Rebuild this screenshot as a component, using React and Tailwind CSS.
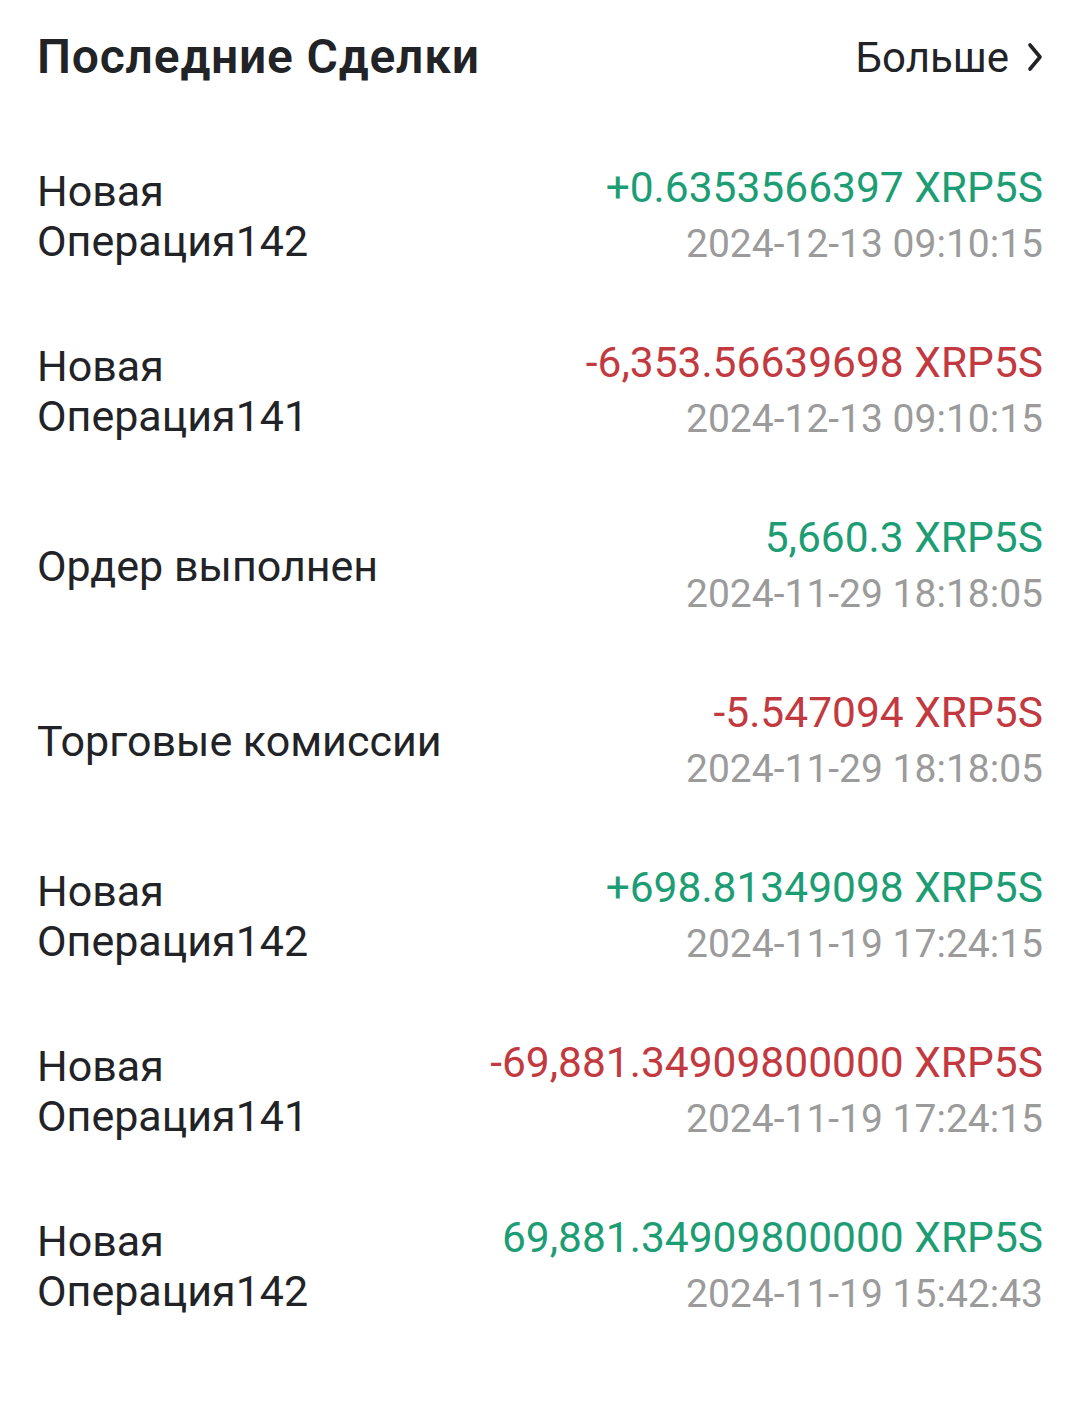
import React from "react";

const trades = [
  { title: ["Новая", "Операция142"], amount: "+0.6353566397 XRP5S", up: true, time: "2024-12-13 09:10:15" },
  { title: ["Новая", "Операция141"], amount: "-6,353.56639698 XRP5S", up: false, time: "2024-12-13 09:10:15" },
  { title: ["Ордер выполнен"], amount: "5,660.3 XRP5S", up: true, time: "2024-11-29 18:18:05" },
  { title: ["Торговые комиссии"], amount: "-5.547094 XRP5S", up: false, time: "2024-11-29 18:18:05" },
  { title: ["Новая", "Операция142"], amount: "+698.81349098 XRP5S", up: true, time: "2024-11-19 17:24:15" },
  { title: ["Новая", "Операция141"], amount: "-69,881.34909800000 XRP5S", up: false, time: "2024-11-19 17:24:15" },
  { title: ["Новая", "Операция142"], amount: "69,881.34909800000 XRP5S", up: true, time: "2024-11-19 15:42:43" },
];

const App = () => {
  return (
    <div className="w-[1080px] h-[1402px] bg-white px-[37px] font-['Roboto',sans-serif]">
      <div className="flex items-center justify-between h-[114px]">
        <h1 className="text-[48px] font-semibold text-[#222327] tracking-[0.8px]">Последние Сделки</h1>
        <div className="flex items-center gap-[18px] text-[#222327]">
          <span className="text-[42px]">Больше</span>
          <svg width="16" height="30" viewBox="0 0 16 30" fill="none">
            <path d="M3 3l10 12-10 12" stroke="#222327" strokeWidth="3.6" strokeLinecap="round" strokeLinejoin="round" />
          </svg>
        </div>
      </div>

      <div className="flex flex-col pt-[14px]">
        {trades.map((t, i) => (
          <div key={i} className="flex items-center justify-between h-[175px]">
            <div className="text-[43px] leading-[50px] text-[#222327]">
              {t.title.map((line) => (
                <div key={line}>{line}</div>
              ))}
            </div>
            <div className="flex flex-col items-end pt-[4px]">
              <div className={t.up ? "text-[42.5px] leading-[50px] text-[#1d9d74]" : "text-[42.5px] leading-[50px] text-[#c23a3f]"}>
                {t.amount}
              </div>
              <div className="mt-[3px] text-[39px] leading-[56px] text-[#9b9b9b]">{t.time}</div>
            </div>
          </div>
        ))}
      </div>
    </div>
  );
};

export default App;
